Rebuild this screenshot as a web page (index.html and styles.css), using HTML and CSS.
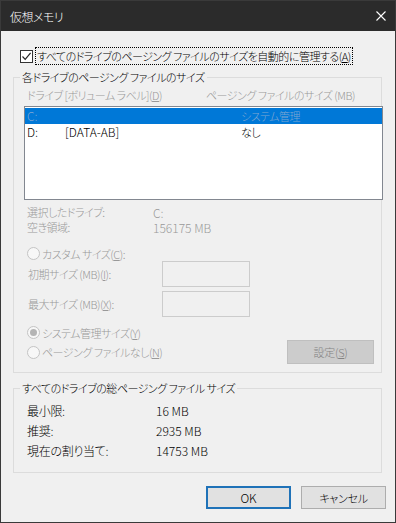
FILE: index.html
```html
<!DOCTYPE html>
<html lang="ja">
<head>
  <meta charset="UTF-8" />
  <title>仮想メモリ</title>
  <link rel="stylesheet" href="styles.css">
</head>
<body>
  <div class="window">
    <div class="titlebar">
      <span class="title">仮想メモリ</span>
      <svg class="close" width="10" height="10" viewBox="0 0 10 10">
        <path d="M0.5 0.5 L9.5 9.5 M9.5 0.5 L0.5 9.5" stroke="#fff" stroke-width="1.1" fill="none" />
      </svg>
    </div>

    <div class="content">
      <label class="auto-row">
        <span class="checkbox">
          <svg width="11" height="11" viewBox="0 0 11 11">
            <path d="M1.5 5.5 L4.2 8.3 L9.6 1.8" stroke="#222" stroke-width="1.2" fill="none" />
          </svg>
        </span>
        <span class="focus">すべてのドライブのページング ファイルのサイズを自動的に管理する(<u>A</u>)</span>
      </label>

      <fieldset class="group group-drives">
        <legend>各ドライブのページング ファイルのサイズ</legend>
        <div class="group-body">
          <div class="list-head">
            <span class="col-drive">ドライブ [ボリューム ラベル](<u>D</u>)</span>
            <span>ページング ファイルのサイズ (MB)</span>
          </div>
          <div class="listbox">
            <div class="list-row selected">
              <span class="c1 lat">C:</span><span class="c2"></span><span class="c3">システム管理</span>
            </div>
            <div class="list-row">
              <span class="c1 lat">D:</span><span class="c2 lat">[DATA-AB]</span><span class="c3">なし</span>
            </div>
          </div>

          <div class="info-row first"><span class="info-label">選択したドライブ:</span><span class="lat">C:</span></div>
          <div class="info-row"><span class="info-label">空き領域:</span><span class="lat">156175 MB</span></div>

          <div class="radio-row custom">
            <span class="radio"></span><span>カスタム サイズ(<u>C</u>):</span>
          </div>
          <div class="size-row">
            <span class="size-label">初期サイズ (MB)(<u>I</u>):</span><span class="size-input"></span>
          </div>
          <div class="size-row second">
            <span class="size-label">最大サイズ (MB)(<u>X</u>):</span><span class="size-input"></span>
          </div>

          <div class="radio-row system">
            <span class="radio checked"></span><span>システム管理サイズ(<u>Y</u>)</span>
          </div>
          <div class="none-row">
            <div class="radio-row">
              <span class="radio"></span><span>ページング ファイルなし(<u>N</u>)</span>
            </div>
            <button class="btn btn-set" disabled>設定(<u>S</u>)</button>
          </div>
        </div>
      </fieldset>

      <fieldset class="group group-total">
        <legend>すべてのドライブの総ページング ファイル サイズ</legend>
        <div class="group-body">
          <div class="total-row"><span class="total-label">最小限:</span><span class="lat">16 MB</span></div>
          <div class="total-row"><span class="total-label">推奨:</span><span class="lat">2935 MB</span></div>
          <div class="total-row"><span class="total-label">現在の割り当て:</span><span class="lat">14753 MB</span></div>
        </div>
      </fieldset>

      <div class="buttons">
        <button class="btn btn-ok"><span class="lat">OK</span></button>
        <button class="btn btn-cancel">キャンセル</button>
      </div>
    </div>
  </div>
</body>
</html>
```

FILE: styles.css
```css
body {
  margin: 0;
  background: #f0f0f0;
  font-family: "Noto Sans CJK JP", sans-serif;
  font-size: 11px;
  font-weight: 300;
  letter-spacing: -0.5px;
  font-feature-settings: "palt";
  color: #000;
}
u {
  text-decoration: underline;
  text-underline-offset: 1px;
}
.lat {
  font-size: 12px;
  letter-spacing: 0;
}
.window {
  width: 396px;
  height: 523px;
  box-sizing: border-box;
  border: 1px solid #3a3a3a;
  background: #f0f0f0;
}
.titlebar {
  height: 30px;
  background: #2b2b2b;
  color: #fff;
  display: flex;
  align-items: center;
  justify-content: space-between;
  padding: 0 9px 0 9px;
}
.title {
  font-size: 12px;
}
.content {
  padding: 16px 13px 0 12px;
}

/* auto checkbox */
.auto-row {
  display: flex;
  align-items: center;
  height: 18px;
  margin-left: 7px;
  gap: 2px;
}
.checkbox {
  width: 13px;
  height: 13px;
  box-sizing: border-box;
  border: 1px solid #333;
  background: #fff;
  display: flex;
  align-items: center;
  justify-content: center;
}
.focus {
  height: 18px;
  box-sizing: border-box;
  border: 1px dotted #000;
  padding: 0 1px;
  line-height: 16px;
  white-space: nowrap;
}

/* group boxes */
.group {
  margin: 5px 0 0;
  padding: 0;
  border: 1px solid #dcdcdc;
  min-width: 0;
}
.group legend {
  margin-left: 6px;
  padding: 0 2px;
  line-height: 14px;
}
.group-drives .group-body {
  padding: 4px 7px 8px 13px;
}
.list-head {
  display: flex;
  height: 15px;
  line-height: 15px;
  color: #999999;
  white-space: nowrap;
}
.col-drive {
  width: 179px;
}
.listbox {
  margin: 3px 0 0 -3px;
  width: 359px;
  height: 94px;
  box-sizing: border-box;
  border: 1px solid #828790;
  background: #fff;
  padding: 1px 0;
}
.list-row {
  display: flex;
  align-items: center;
  height: 16px;
  line-height: 16px;
  padding-left: 2px;
}
.list-row.selected {
  background: #0078d7;
  color: #7fa6d2;
}
.c1 {
  width: 38px;
}
.c2 {
  width: 176px;
}
.info-row {
  display: flex;
  align-items: center;
  height: 15px;
  line-height: 15px;
  color: #999999;
}
.info-row.first {
  margin-top: 5px;
}
.info-label {
  width: 126px;
}

/* radios and sizes */
.radio-row {
  display: flex;
  align-items: center;
  gap: 2px;
  height: 15px;
  color: #999999;
}
.radio-row.custom {
  margin-top: 11px;
}
.radio-row.system {
  margin-top: 8px;
}
.radio {
  width: 13px;
  height: 13px;
  box-sizing: border-box;
  border: 1px solid #c4c4c4;
  border-radius: 50%;
  background: #f7f7f7;
  display: flex;
  align-items: center;
  justify-content: center;
}
.radio.checked::after {
  content: "";
  width: 7px;
  height: 7px;
  border-radius: 50%;
  background: #b4b4b4;
}
.size-row {
  display: flex;
  align-items: center;
  height: 26px;
  color: #999999;
}
.size-row.second {
  margin-top: 4px;
}
.size-label {
  width: 134px;
  padding-left: 1px;
}
.size-input {
  width: 88px;
  height: 26px;
  box-sizing: border-box;
  border: 1px solid #cccccc;
  background: #f0f0f0;
}
.none-row {
  display: flex;
  align-items: center;
  justify-content: space-between;
  height: 24px;
}

/* buttons */
.btn {
  font-family: inherit;
  font-size: 11px;
  font-weight: 300;
  letter-spacing: -0.3px;
  font-feature-settings: "palt";
  box-sizing: border-box;
  padding: 0;
  background: #e1e1e1;
  border: 1px solid #adadad;
  color: #000;
}
.btn-set {
  width: 87px;
  height: 24px;
  background: #cccccc;
  border-color: #bfbfbf;
  color: #838383;
}
.group-total {
  margin-top: 8px;
}
.group-total .group-body {
  padding: 6px 0 11px 13px;
}
.total-row {
  display: flex;
  align-items: center;
  height: 20px;
  line-height: 20px;
}
.total-label {
  width: 129px;
  font-size: 12px;
  letter-spacing: -0.3px;
}
.buttons {
  display: flex;
  justify-content: flex-end;
  gap: 10px;
  margin: 13px -4px 0 0;
}
.btn-ok,
.btn-cancel {
  width: 85px;
  height: 23px;
}
.btn-ok {
  border: 2px solid #1f72b8;
}
```
